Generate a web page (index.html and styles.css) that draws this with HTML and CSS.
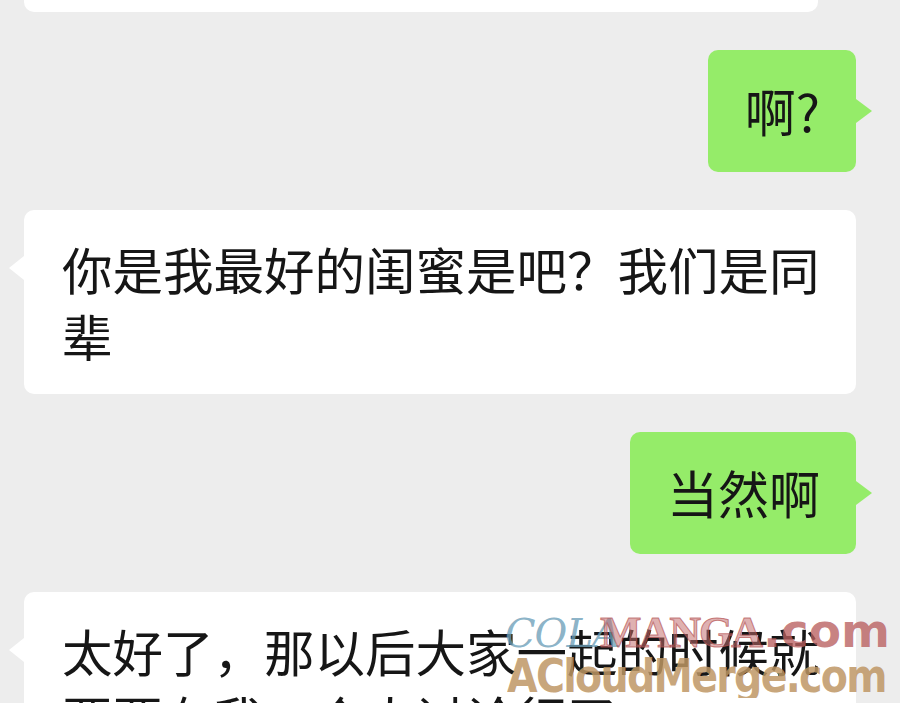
FILE: index.html
```html
<!DOCTYPE html>
<html lang="zh-CN">
<head>
<meta charset="utf-8">
<title>聊天</title>
<link rel="stylesheet" href="styles.css">
</head>
<body>
<main class="chat">
  <div class="row in">
    <div class="bubble white stub"></div>
  </div>
  <div class="row out">
    <div class="bubble green">啊?</div>
  </div>
  <div class="row in">
    <div class="bubble white">你是我最好的闺蜜是吧？我们是同辈</div>
  </div>
  <div class="row out">
    <div class="bubble green">当然啊</div>
  </div>
  <div class="row in">
    <div class="bubble white">太好了，那以后大家一起的时候就要要有我一个人讨论行了</div>
  </div>
</main>
<div class="watermark">
  <div class="wm-line1"><span class="wm-cola">COLA</span><span class="wm-manga">MANGA</span><span class="wm-com">.com</span></div>
  <div class="wm-line2">ACloudMerge.com</div>
</div>
</body>
</html>
```

FILE: styles.css
```css
html, body {
  margin: 0;
  padding: 0;
  background: #ededed;
  overflow: hidden;
}

body {
  width: 900px;
  height: 703px;
  position: relative;
  font-family: "Noto Sans CJK SC", "Noto Sans", sans-serif;
  color: #161616;
}

.chat {
  display: flex;
  flex-direction: column;
  gap: 38px;
  padding: 0 44px 0 24px;
}

.row {
  display: flex;
}

.row.in {
  justify-content: flex-start;
}

.row.out {
  justify-content: flex-end;
}

.bubble {
  position: relative;
  font-size: 51px;
  line-height: 67px;
  padding: 27px 36px 28px 37px;
  border-radius: 10px;
  box-sizing: border-box;
}

.bubble.white {
  background: #ffffff;
  max-width: 833px;
  font-size: 50.5px;
  padding: 25px 32px 25px 38px;
}

.bubble.green {
  background: #95ec69;
}

/* speech tails */
.bubble.white::before {
  content: "";
  position: absolute;
  left: -15px;
  top: 46px;
  border-style: solid;
  border-width: 12px 15px 12px 0;
  border-color: transparent #ffffff transparent transparent;
}

.bubble.green::after {
  content: "";
  position: absolute;
  right: -16px;
  top: 49px;
  border-style: solid;
  border-width: 12px 0 12px 16px;
  border-color: transparent transparent transparent #95ec69;
}

/* tail of the clipped previous message is off-screen */
.bubble.stub {
  width: 794px;
  height: 12px;
  padding: 0;
  border-radius: 0 0 10px 10px;
}

.bubble.stub::before {
  display: none;
}

/* site watermark overlay */
.watermark {
  position: absolute;
  left: 505px;
  top: 608px;
  width: 395px;
  overflow: hidden;
  pointer-events: none;
  white-space: nowrap;
}

.wm-line1 {
  height: 46px;
  line-height: 46px;
  display: flex;
  align-items: baseline;
}

.wm-cola {
  font-family: "DejaVu Serif", serif;
  font-style: italic;
  font-size: 40px;
  color: rgba(110, 160, 185, 0.8);
  letter-spacing: -1px;
  width: 95px;
  display: inline-block;
}

.wm-manga {
  font-family: "Liberation Serif", serif;
  font-weight: bold;
  font-size: 44px;
  color: rgba(195, 110, 110, 0.55);
  -webkit-text-stroke: 1px rgba(180, 80, 80, 0.7);
  letter-spacing: -2px;
  width: 163px;
  display: inline-block;
}

.wm-com {
  font-family: "DejaVu Sans", sans-serif;
  font-weight: bold;
  font-size: 47px;
  color: rgba(185, 95, 95, 0.8);
  letter-spacing: 0;
}

.wm-line2 {
  font-family: "DejaVu Sans", sans-serif;
  font-weight: bold;
  font-size: 46px;
  line-height: 44px;
  color: rgba(190, 150, 100, 0.85);
  letter-spacing: -2px;
  margin-left: 2px;
  transform: scaleX(0.86);
  transform-origin: left center;
}
```
